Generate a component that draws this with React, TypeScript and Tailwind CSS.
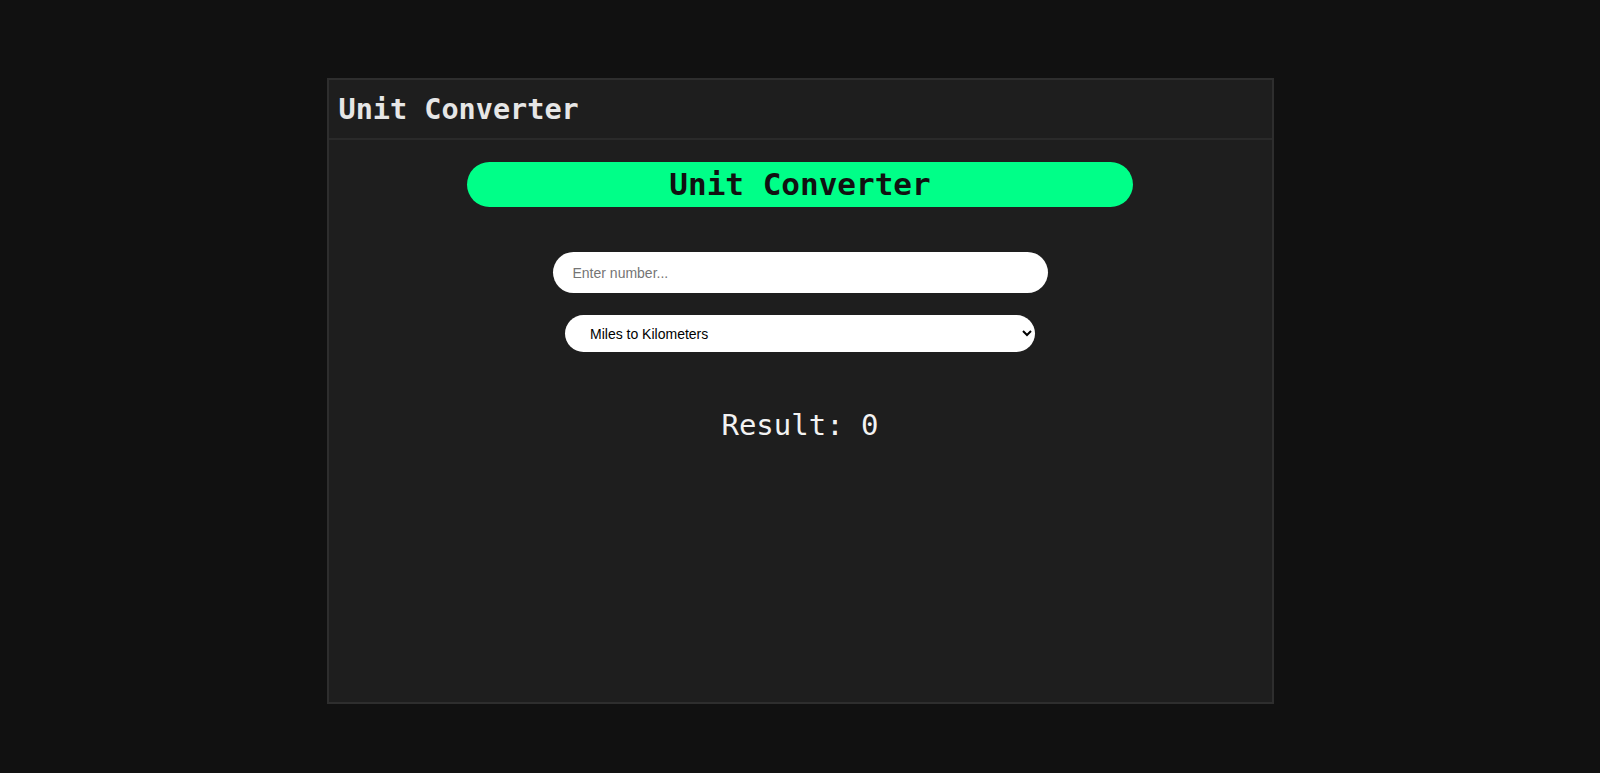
import { useState } from "react";

export default function App() {
  const [value, setValue] = useState("");
  const [mode, setMode] = useState("mi-km");

  const convert = () => {
    const n = parseFloat(value);
    if (isNaN(n)) return 0;
    if (mode === "mi-km") return +(n * 1.60934).toFixed(4);
    if (mode === "km-mi") return +(n / 1.60934).toFixed(4);
    if (mode === "lb-kg") return +(n * 0.453592).toFixed(4);
    return +(n / 0.453592).toFixed(4);
  };

  return (
    <main className="min-h-screen bg-[#111111] pt-[78px] flex justify-center">
      <div className="w-[947px] h-[626px] border-2 border-[#2e2e2e] bg-[#1e1e1e] flex flex-col">
        {/** Header */}
        <div className="h-[60px] border-b-2 border-[#2a2a2a] flex items-center px-[10px]">
          <h1 className="text-[28.5px] font-bold text-[#e6e6e6] pt-[3px]" style={{ fontFamily: '"DejaVu Sans Mono", monospace' }}>
            Unit Converter
          </h1>
        </div>

        <div className="flex flex-col items-center" style={{ fontFamily: '"DejaVu Sans Mono", monospace' }}>
          <div className="mt-[22px] w-[666px] h-[45px] rounded-full bg-[#00ff88] flex items-center justify-center">
            <p className="text-[31px] font-bold text-[#111111]">Unit Converter</p>
          </div>

          <input
            type="number"
            value={value}
            onChange={(e) => setValue(e.target.value)}
            placeholder="Enter number..."
            className="mt-[45px] w-[495px] h-[41px] rounded-full bg-white px-[20px] text-[14px] text-black placeholder:text-[#757575] outline-none"
            style={{ fontFamily: '"Liberation Sans", Arial, sans-serif' }}
          />

          <select
            value={mode}
            onChange={(e) => setMode(e.target.value)}
            className="mt-[22px] w-[470px] h-[37px] rounded-full bg-white pl-[21px] pr-[6px] text-[14px] text-black outline-none"
            style={{ fontFamily: '"Liberation Sans", Arial, sans-serif' }}
          >
            <option value="mi-km">Miles to Kilometers</option>
            <option value="km-mi">Kilometers to Miles</option>
            <option value="lb-kg">Pounds to Kilograms</option>
            <option value="kg-lb">Kilograms to Pounds</option>
          </select>

          <p className="mt-[56px] text-[29px] leading-[34px] text-[#f2f2f2]">Result: {convert()}</p>
        </div>
      </div>
    </main>
  );
}
